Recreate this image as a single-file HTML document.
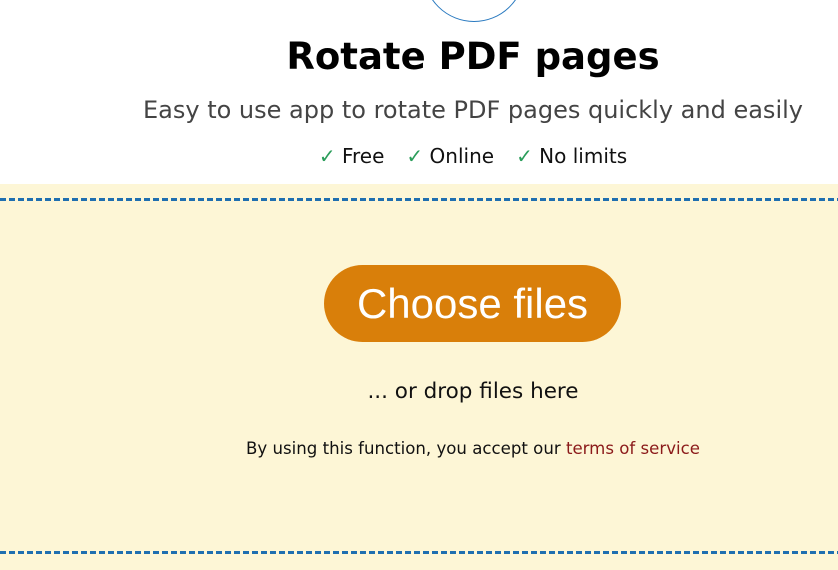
<!DOCTYPE html>
<html><head><meta charset="utf-8"><style>
html,body{margin:0;padding:0;width:838px;height:570px;overflow:hidden;background:#fff;font-family:"DejaVu Sans","Liberation Sans",sans-serif;}
.circle{position:absolute;left:423px;top:-80px;width:100px;height:100px;border:1px solid #2a7ac0;border-radius:50%;}
h1{position:absolute;left:0;width:946px;top:35px;margin:0;text-align:center;font-size:37px;font-weight:bold;color:#000;}
.sub{position:absolute;left:0;width:946px;top:96px;text-align:center;font-size:24px;color:#444;}
.feat{position:absolute;left:0;width:946px;top:144px;text-align:center;font-size:20px;color:#111;}
.feat span{margin:0 11px;}
.feat b{color:#2a9d5a;font-weight:normal;font-family:"Liberation Sans",sans-serif;}
.zone{position:absolute;left:0;top:184px;width:838px;height:386px;background:#fdf6d6;}
.dash{position:absolute;left:0;width:838px;height:3px;background:repeating-linear-gradient(90deg,#1f6fb0 0 6px,transparent 6px 9px);}
.btn{position:absolute;left:324px;top:265px;width:297px;height:77px;border-radius:39px;background:#d97f0a;color:#fff;font-family:"Liberation Sans",sans-serif;font-size:42px;text-align:center;line-height:77px;}
.drop{position:absolute;left:0;width:946px;top:379px;text-align:center;font-size:21.5px;color:#111;}
.tos{position:absolute;left:0;width:946px;top:439px;text-align:center;font-size:16.6px;color:#111;}
.tos a{color:#8b1a1a;text-decoration:none;}
</style></head><body>
<div class="circle"></div>
<h1>Rotate PDF pages</h1>
<div class="sub">Easy to use app to rotate PDF pages quickly and easily</div>
<div class="feat"><span><b>✓</b> Free</span><span><b>✓</b> Online</span><span><b>✓</b> No limits</span></div>
<div class="zone"></div>
<div class="dash" style="top:198px"></div>
<div class="dash" style="top:551px"></div>
<div class="btn">Choose files</div>
<div class="drop">... or drop files here</div>
<div class="tos">By using this function, you accept our <a>terms of service</a></div>
</body></html>
